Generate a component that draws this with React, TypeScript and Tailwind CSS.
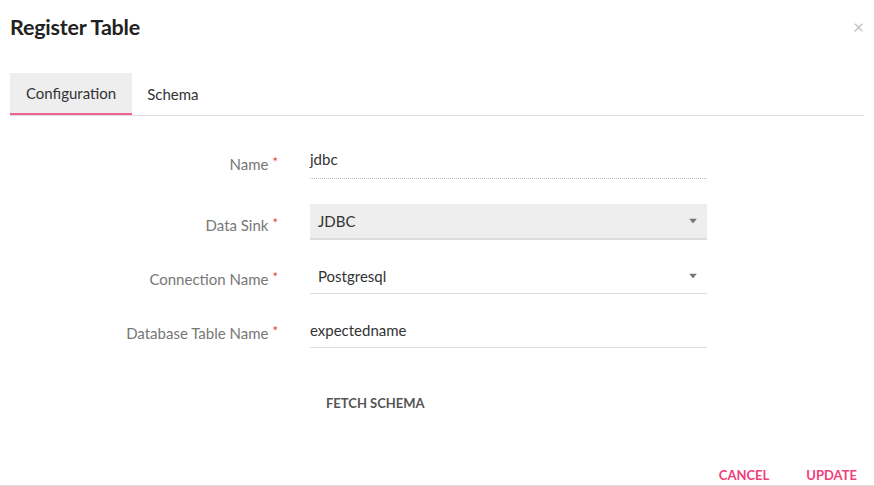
type Field = {
  label: string;
  value: string;
  kind: "text" | "dotted" | "select" | "filled";
};

const fields: Field[] = [
  { label: "Name", value: "jdbc", kind: "dotted" },
  { label: "Data Sink", value: "JDBC", kind: "filled" },
  { label: "Connection Name", value: "Postgresql", kind: "select" },
  { label: "Database Table Name", value: "expectedname", kind: "text" },
];

function Caret() {
  return (
    <svg width="8" height="5" viewBox="0 0 8 5" className="absolute right-[10px] top-1/2 -translate-y-1/2">
      <path d="M0 0h8L4 5z" fill="#777" />
    </svg>
  );
}

function FormRow({ field }: { field: Field }) {
  const box =
    field.kind === "filled"
      ? "bg-[#eeeeee] border-b-2 border-[#dddddd] px-[8px]"
      : field.kind === "select"
        ? "border-b border-[#dddddd] px-[8px]"
        : field.kind === "dotted"
          ? "border-b border-dotted border-[#bbbbbb]"
          : "border-b border-[#dddddd]";
  const isSelect = field.kind === "filled" || field.kind === "select";

  return (
    <div className="flex items-center">
      <label className="w-[278px] text-right text-[15px] text-[#777] pt-[5px]">
        {field.label}
        <span className="text-[#e53935] ml-[4px] text-[13px] align-top">*</span>
      </label>
      <div className={`relative ml-[32px] w-[397px] h-[36px] flex items-center text-[15px] text-[#333] ${box}`}>
        <span className={field.kind === "dotted" ? "-mt-[4px]" : ""}>{field.value}</span>
        {isSelect && <Caret />}
      </div>
    </div>
  );
}

export default function App() {
  return (
    <div
      className="w-[874px] h-[486px] bg-white flex flex-col overflow-hidden"
      style={{ fontFamily: "Lato, 'Open Sans', sans-serif" }}
    >
      <div className="flex items-start justify-between pl-[10px] pr-[10px] pt-[11px]">
        <h2 className="text-[21.5px] font-bold text-[#222] tracking-[-0.2px]">Register Table</h2>
        <span className="text-[19px] text-[#c4c4c4] leading-none mt-[6px]">×</span>
      </div>

      <div className="mx-[10px] mt-[30px] flex border-b border-[#dddddd]">
        <div className="h-[42px] px-[16px] flex items-center bg-[#eeeeee] border-b-2 border-[#f06292] -mb-px text-[15px] text-[#333]">
          Configuration
        </div>
        <div className="h-[42px] px-[15px] flex items-center text-[15px] text-[#333]">Schema</div>
      </div>

      <div className="flex flex-col mt-[27px]">
        <FormRow field={fields[0]} />
        <div className="flex flex-col gap-[18px] mt-[25px]">
          <FormRow field={fields[1]} />
          <FormRow field={fields[2]} />
          <FormRow field={fields[3]} />
        </div>
      </div>

      <div className="ml-[310px] mt-[37px]">
        <button className="px-[16px] h-[36px] text-[13px] font-bold text-[#555] uppercase">Fetch Schema</button>
      </div>

      <div className="mt-auto flex justify-end items-center gap-[37px] pr-[17px] h-[19px] border-b border-[#dddddd] text-[13px] font-bold text-[#f0407a]">
        <button>CANCEL</button>
        <button>UPDATE</button>
      </div>
    </div>
  );
}
